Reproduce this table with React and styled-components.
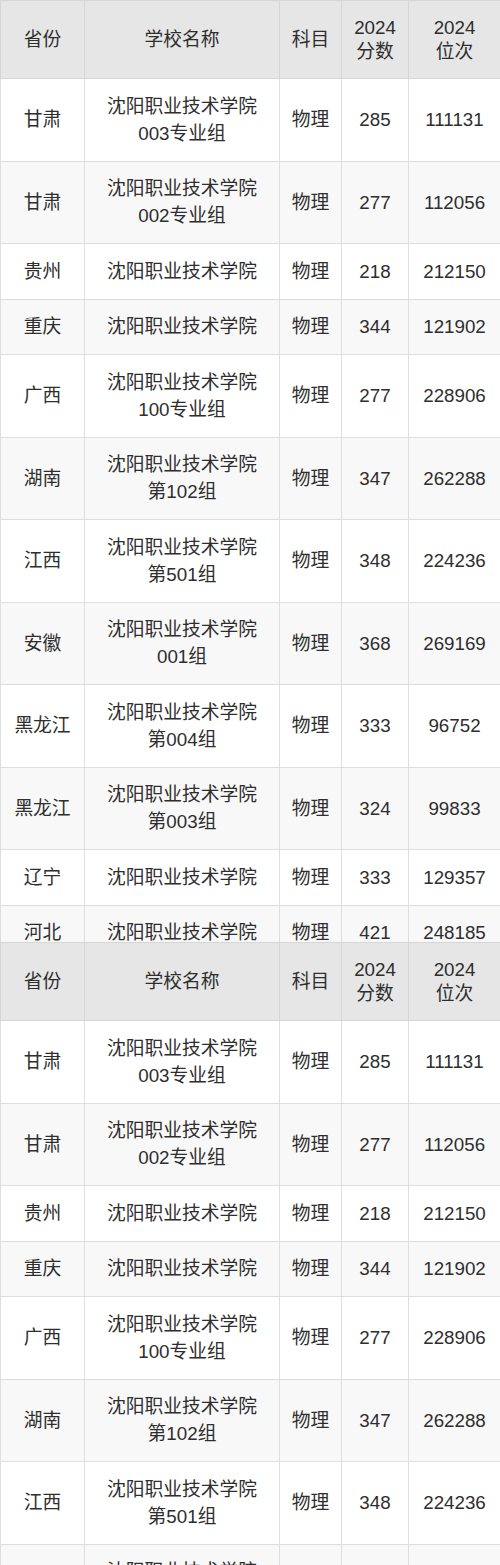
import styled, { createGlobalStyle } from "styled-components";

const GlobalStyle = createGlobalStyle`
  html, body {
    margin: 0;
    padding: 0;
    background: #fff;
  }
  body {
    width: 500px;
    height: 1565px;
    overflow: hidden;
    font-family: "Liberation Sans", "Noto Sans CJK SC", sans-serif;
    color: #2e2e2e;
  }
`

const Clip = styled.div`
  width: 500px;
  height: ${props => props.h ? props.h + "px" : "auto"};
  overflow: hidden;
`

const Table = styled.table`
  width: 500px;
  border-collapse: collapse;
  table-layout: fixed;
  font-size: 18.75px;
`

const Th = styled.th`
  font-weight: normal;
  background: #e6e6e6;
  border: 1px solid #d6d6d6;
  line-height: 24px;
  padding: 14.5px 2px;
  text-align: center;
  vertical-align: middle;
`

const Tr = styled.tr`
  background: ${props => props.odd ? "#f8f8f8" : "#fff"};
`

const Td = styled.td`
  border: 1px solid #dedede;
  line-height: 27px;
  padding: 13.75px 2px;
  text-align: center;
  vertical-align: middle;
  white-space: nowrap;
`

const rows = [
  ["甘肃", ["沈阳职业技术学院", "003专业组"], "物理", "285", "111131"],
  ["甘肃", ["沈阳职业技术学院", "002专业组"], "物理", "277", "112056"],
  ["贵州", ["沈阳职业技术学院"], "物理", "218", "212150"],
  ["重庆", ["沈阳职业技术学院"], "物理", "344", "121902"],
  ["广西", ["沈阳职业技术学院", "100专业组"], "物理", "277", "228906"],
  ["湖南", ["沈阳职业技术学院", "第102组"], "物理", "347", "262288"],
  ["江西", ["沈阳职业技术学院", "第501组"], "物理", "348", "224236"],
  ["安徽", ["沈阳职业技术学院", "001组"], "物理", "368", "269169"],
  ["黑龙江", ["沈阳职业技术学院", "第004组"], "物理", "333", "96752"],
  ["黑龙江", ["沈阳职业技术学院", "第003组"], "物理", "324", "99833"],
  ["辽宁", ["沈阳职业技术学院"], "物理", "333", "129357"],
  ["河北", ["沈阳职业技术学院"], "物理", "421", "248185"],
];

function ScoreTable() {
  return (
    <Table>
      <colgroup>
        <col style={{ width: 84 }} />
        <col style={{ width: 195 }} />
        <col style={{ width: 62 }} />
        <col style={{ width: 67 }} />
        <col style={{ width: 92 }} />
      </colgroup>
      <thead>
        <tr>
          <Th>省份</Th>
          <Th>学校名称</Th>
          <Th>科目</Th>
          <Th>2024<br />分数</Th>
          <Th>2024<br />位次</Th>
        </tr>
      </thead>
      <tbody>
        {rows.map((r, i) => (
          <Tr key={i} odd={i % 2 === 1}>
            <Td>{r[0]}</Td>
            <Td>
              {r[1].map((line, j) => (
                <div key={j}>{line}</div>
              ))}
            </Td>
            <Td>{r[2]}</Td>
            <Td>{r[3]}</Td>
            <Td>{r[4]}</Td>
          </Tr>
        ))}
      </tbody>
    </Table>
  );
}

export default function App() {
  return (
    <>
      <GlobalStyle />
      <Clip h={942}>
        <ScoreTable />
      </Clip>
      <Clip>
        <ScoreTable />
      </Clip>
    </>
  );
}
